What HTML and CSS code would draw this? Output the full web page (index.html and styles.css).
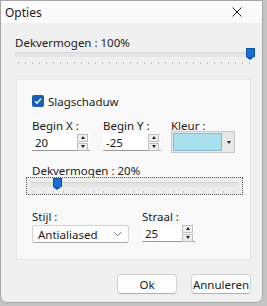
FILE: index.html
```html
<!DOCTYPE html>
<html lang="nl">
<head>
    <meta charset="UTF-8">
    <title>Opties</title>
    <link rel="stylesheet" href="styles.css">
</head>
<body>
    <div class="window">
        <div class="titlebar">
            <span class="title">Opties</span>
            <svg class="close" width="10" height="10" viewBox="0 0 10 10"><path d="M0.5 0.5 L9.5 9.5 M9.5 0.5 L0.5 9.5" stroke="#222" stroke-width="1"/></svg>
        </div>
        <div class="content">
            <div class="label">Dekvermogen : 100%</div>
            <div class="slider wide">
                <div class="track"></div>
                <div class="thumb" style="left: 231px"></div>
                <div class="ticks"></div>
            </div>

            <div class="group">
                <label class="check">
                    <span class="box"><svg width="10" height="10" viewBox="0 0 10 10"><path d="M2 5.2 L4 7.2 L8 2.8" fill="none" stroke="#fff" stroke-width="1.4"/></svg></span>
                    Slagschaduw
                </label>

                <div class="row fields">
                    <div class="field">
                        <div class="label">Begin X :</div>
                        <div class="spin w58"><span class="val">20</span><span class="arrows"><i class="up"></i><i class="down"></i></span></div>
                    </div>
                    <div class="field">
                        <div class="label">Begin Y :</div>
                        <div class="spin w58"><span class="val">-25</span><span class="arrows"><i class="up"></i><i class="down"></i></span></div>
                    </div>
                    <div class="field kleur">
                        <div class="label">Kleur :</div>
                        <div class="color"><span class="swatch"></span><span class="drop"><i class="down"></i></span></div>
                    </div>
                </div>

                <div class="label sub">Dekvermogen : 20%</div>
                <div class="slider focus">
                    <div class="track"></div>
                    <div class="thumb" style="left: 26px"></div>
                    <div class="ticks"></div>
                </div>

                <div class="row lower">
                    <div class="field">
                        <div class="label">Stijl :</div>
                        <div class="select">Antialiased
                            <svg width="9" height="6" viewBox="0 0 9 6"><path d="M0.5 0.8 L4.5 4.8 L8.5 0.8" fill="none" stroke="#777" stroke-width="1"/></svg>
                        </div>
                    </div>
                    <div class="field">
                        <div class="label">Straal :</div>
                        <div class="spin w53"><span class="val">25</span><span class="arrows"><i class="up"></i><i class="down"></i></span></div>
                    </div>
                </div>
            </div>

            <div class="buttons">
                <button class="btn">Ok</button>
                <button class="btn">Annuleren</button>
            </div>
        </div>
    </div>
</body>
</html>
```

FILE: styles.css
```css
body {
    margin: 0;
    background-color: #c4c4c4;
    font-family: "Noto Sans", Arial, sans-serif;
    font-size: 11.5px;
    color: #1b1b1b;
}

.window {
    width: 261px;
    height: 301px;
    background-color: #f0f0f0;
    border: 1px solid #a6a6a6;
    border-radius: 0 0 7px 7px;
    overflow: hidden;
}

.titlebar {
    height: 22px;
    background-color: #fbfbfb;
    display: flex;
    align-items: center;
    justify-content: space-between;
    padding: 0 20px 0 4px;
    font-size: 12px;
}

.content {
    padding: 12px 0 0 14px;
}

.label {
    line-height: 15px;
    margin-bottom: 1px;
}

.slider {
    position: relative;
    height: 20px;
}

.slider .track {
    position: absolute;
    left: 0;
    right: 0;
    top: 5px;
    height: 4px;
    background-color: #e4e4e4;
    border-top: 1px solid #d6d6d6;
}

.slider .thumb {
    position: absolute;
    top: 1px;
    width: 7px;
    height: 8px;
    background-color: #1a6fd0;
    border: 1px solid #0c54a8;
    border-bottom: none;
}

.slider .thumb::after {
    content: "";
    position: absolute;
    left: -1px;
    top: 8px;
    border-left: 4.5px solid transparent;
    border-right: 4.5px solid transparent;
    border-top: 3px solid #0c54a8;
}

.slider .ticks {
    position: absolute;
    left: 3px;
    right: 3px;
    top: 15px;
    height: 2px;
    background-image: repeating-linear-gradient(to right, #c2c2c2 0, #c2c2c2 1px, transparent 1px, transparent 7px);
}

.slider.wide {
    width: 240px;
    margin-top: -4px;
    margin-bottom: 12px;
}

.group {
    width: 218px;
    height: 165px;
    background-color: #f9f9f9;
    border: 1px solid #e6e6e6;
    margin-left: 1px;
    padding: 14px 0 0 15px;
}

.check {
    display: flex;
    align-items: center;
    gap: 4px;
    height: 14px;
    margin-bottom: 10px;
}

.check .box {
    width: 12px;
    height: 12px;
    background-color: #1a5fb4;
    border-radius: 2px;
    display: flex;
    align-items: center;
    justify-content: center;
}

.row {
    display: flex;
    gap: 13px;
}

.field.kleur {
    margin-left: -3px;
}

.spin {
    height: 17px;
    background-color: #fff;
    border-bottom: 1px solid #9a9a9a;
    display: flex;
    align-items: center;
    justify-content: space-between;
    padding-left: 3px;
    box-sizing: border-box;
}

.w58 { width: 58px; }
.w53 { width: 53px; }

.arrows {
    display: flex;
    flex-direction: column;
    gap: 1px;
    margin-right: 2px;
}

.arrows i, .drop i {
    display: flex;
    width: 9px;
    height: 6px;
    background-color: #eeeeee;
    border: 1px solid #bdbdbd;
    align-items: center;
    justify-content: center;
}

.up::after, .down::after {
    content: "";
    border-left: 2.5px solid transparent;
    border-right: 2.5px solid transparent;
}

.up::after { border-bottom: 3px solid #222; }
.down::after { border-top: 3px solid #222; }

.color {
    width: 62px;
    height: 20px;
    display: flex;
    border: 1px solid #c8c8c8;
    background-color: #e8e8e8;
    margin-top: -3px;
}

.color .swatch {
    flex: 1;
    background-color: #a8e0ee;
    border: 1px solid #8fb9c4;
    margin: 1px;
}

.color .drop {
    width: 11px;
    display: flex;
    align-items: center;
    justify-content: center;
}

.color .drop i {
    background: none;
    border: none;
}

.label.sub {
    line-height: 13px;
    margin-top: 11px;
    margin-bottom: 0;
}

.slider.focus {
    width: 215px;
    margin-left: -6px;
    height: 16px;
    border: 1px dotted #555;
    background-color: #ededed;
}

.slider.focus .track {
    left: 4px;
    right: 4px;
    top: 4px;
}

.slider.focus .thumb {
    top: 0;
}

.slider.focus .ticks {
    top: 13px;
    left: 6px;
    right: 6px;
    background-image: repeating-linear-gradient(to right, #c2c2c2 0, #c2c2c2 1px, transparent 1px, transparent 10px);
}

.row.lower {
    margin-top: 14px;
}

.select {
    height: 16px;
    width: 84px;
    background-color: #fdfdfd;
    border: 1px solid #d4d4d4;
    border-bottom-color: #a8a8a8;
    border-radius: 3px;
    display: flex;
    align-items: center;
    justify-content: space-between;
    padding: 0 6px 0 5px;
    margin-top: 1px;
}

.row.lower .spin {
    margin-top: 1px;
}

.buttons {
    display: flex;
    justify-content: flex-end;
    gap: 14px;
    padding-right: 11px;
    margin-top: 14px;
}

.btn {
    width: 60px;
    height: 20px;
    font-family: inherit;
    font-size: 11.5px;
    color: #1b1b1b;
    background-color: #fdfdfd;
    border: 1px solid #d0d0d0;
    border-bottom-color: #b0b0b0;
    border-radius: 4px;
    padding: 0;
}
```
